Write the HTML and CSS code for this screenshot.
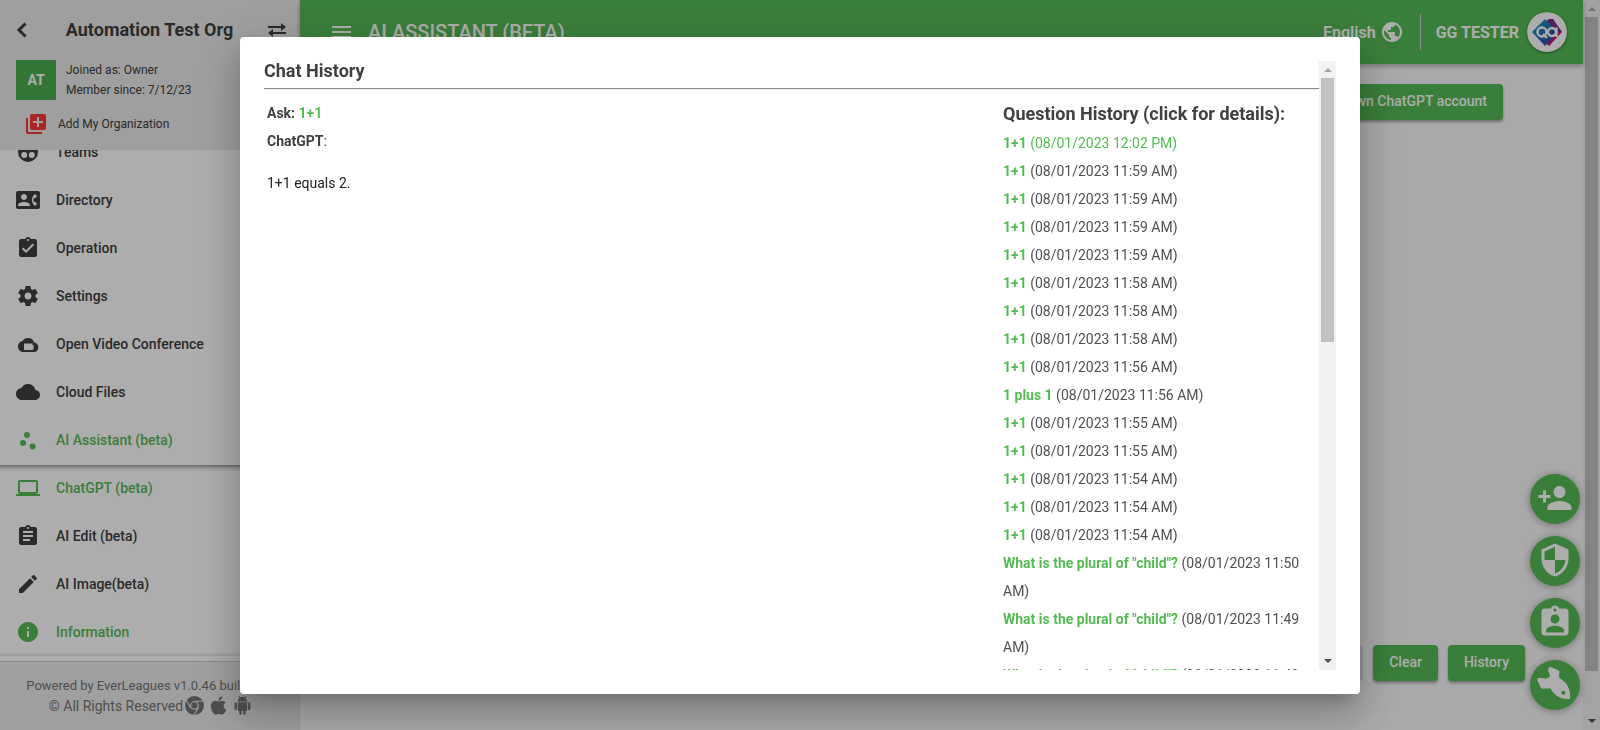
FILE: index.html
```html
<!DOCTYPE html>
<html lang="en">
<head>
<meta charset="utf-8">
<title>AI Assistant (beta)</title>
<link rel="stylesheet" href="styles.css">
</head>
<body>
<div class="page">
  <aside class="sidebar">
    <header class="org">
      <div class="org-top">
        <button class="icon-btn" aria-label="Back"><svg class="ic-back" viewBox="0 0 12 16"><path d="M9.500 1.500L3 8l6.500 6.500" fill="none" stroke="currentColor" stroke-width="3"/></svg></button>
        <h2 class="org-name">Automation Test Org</h2>
        <button class="icon-btn" aria-label="Switch organization"><svg class="ic-swap" viewBox="0 0 20 14"><path d="M1 3h13V0l5 4-5 4V5H1zM19 9v2H6v3l-5-4 5-4v3z"/></svg></button>
      </div>
      <div class="org-info">
        <div class="org-badge">AT</div>
        <div class="org-meta"><div>Joined as: Owner</div><div>Member since: 7/12/23</div></div>
      </div>
      <button class="add-org"><svg class="ic red" viewBox="0 0 24 24"><path d="M4 6H2v14c0 1.100.9 2 2 2h14v-2H4V6zm16-4H8c-1.100 0-2 .9-2 2v12c0 1.100.9 2 2 2h12c1.100 0 2-.9 2-2V4c0-1.100-.9-2-2-2zm-1 9h-4v4h-2v-4H9V9h4V5h2v4h4v2z"/></svg>Add My Organization</button>
    </header>
    <nav class="nav">
      <a class="item" href="#"><svg class="ic" viewBox="0 0 24 24"><path fill-rule="evenodd" d="M12 2a10 10 0 1 0 0 20 10 10 0 0 0 0-20zM8.200 12a3 3 0 1 1 0 6 3 3 0 0 1 0-6zm7.600 0a3 3 0 1 1 0 6 3 3 0 0 1 0-6z"/></svg>Teams</a>
      <a class="item" href="#"><svg class="ic" viewBox="0 0 24 24"><path d="M22 3H2C.9 3 0 3.900 0 5v14c0 1.100.9 2 2 2h20c1.100 0 1.990-.9 1.990-2L24 5c0-1.100-.9-2-2-2zM8 6c1.660 0 3 1.340 3 3s-1.340 3-3 3-3-1.340-3-3 1.340-3 3-3zm6 12H2v-1c0-2 4-3.100 6-3.100s6 1.100 6 3.100v1zm3.850-4h1.640L21 16l-1.990 1.990c-1.310-.98-2.280-2.380-2.730-3.990-.18-.64-.28-1.310-.28-2s.1-1.360.28-2c.45-1.620 1.420-3.010 2.730-3.990L21 8l-1.510 2h-1.640c-.22.63-.35 1.300-.35 2s.13 1.370.35 2z"/></svg>Directory</a>
      <a class="item" href="#"><svg class="ic" viewBox="0 0 24 24"><path d="M19 3h-4.180C14.400 1.840 13.300 1 12 1c-1.300 0-2.400.84-2.820 2H5c-1.100 0-2 .9-2 2v14c0 1.100.9 2 2 2h14c1.100 0 2-.9 2-2V5c0-1.100-.9-2-2-2zm-7 0c.55 0 1 .45 1 1s-.45 1-1 1-1-.45-1-1 .45-1 1-1zm-2 14l-4-4 1.410-1.410L10 14.170l6.590-6.590L18 9l-8 8z"/></svg>Operation</a>
      <a class="item" href="#"><svg class="ic" viewBox="0 0 24 24"><path d="M19.430 12.980c.04-.32.07-.64.07-.98s-.03-.66-.07-.98l2.110-1.650c.19-.15.24-.42.12-.64l-2-3.460c-.12-.22-.39-.3-.61-.22l-2.490 1c-.52-.4-1.080-.73-1.690-.98l-.38-2.650C14.460 2.180 14.250 2 14 2h-4c-.25 0-.46.18-.49.42l-.38 2.650c-.61.25-1.170.59-1.690.98l-2.490-1c-.23-.09-.49 0-.61.22l-2 3.460c-.13.22-.07.49.12.64l2.110 1.650c-.04.32-.07.65-.07.98s.03.66.07.98l-2.110 1.650c-.19.15-.24.42-.12.64l2 3.460c.12.22.39.3.61.22l2.490-1c.52.4 1.080.73 1.690.98l.38 2.650c.03.24.24.42.49.42h4c.25 0 .46-.18.49-.42l.38-2.650c.61-.25 1.170-.59 1.690-.98l2.490 1c.23.09.49 0 .61-.22l2-3.460c.12-.22.07-.49-.12-.64l-2.110-1.650zM12 15.500c-1.930 0-3.500-1.570-3.500-3.500s1.570-3.500 3.500-3.500 3.500 1.570 3.500 3.500-1.570 3.500-3.500 3.500z"/></svg>Settings</a>
      <a class="item" href="#"><svg class="ic" viewBox="0 0 24 24"><path fill-rule="evenodd" d="M18.200 10.600C17.600 7.800 15.100 6 12.200 6 9.700 6 7.600 7.200 6.600 9.100 4.100 9.500 2 11.700 2 14.500 2 17.500 4.300 20 7 20h11c2.400 0 4.400-2 4.400-4.600 0-2.500-1.900-4.600-4.200-4.800zM8 11.500h8.500v2l1-.6v5l-1-.6v.7H8z"/></svg>Open Video Conference</a>
      <a class="item" href="#"><svg class="ic" viewBox="0 0 24 24"><path d="M19.350 10.040C18.670 6.590 15.640 4 12 4 9.110 4 6.600 5.640 5.350 8.040 2.340 8.360 0 10.910 0 14c0 3.310 2.690 6 6 6h13c2.760 0 5-2.240 5-5 0-2.640-2.050-4.780-4.650-4.960z"/></svg>Cloud Files</a>
      <a class="item on" href="#"><svg class="ic" viewBox="0 0 24 24"><circle cx="11" cy="7" r="3"/><circle cx="7" cy="15" r="3"/><circle cx="16.600" cy="18.600" r="3"/></svg>AI Assistant (beta)</a>
      <div class="subnav">
        <a class="item on" href="#"><svg class="ic" viewBox="0 0 24 24"><path d="M20 18c1.100 0 1.990-.9 1.990-2L22 6c0-1.100-.9-2-2-2H4c-1.100 0-2 .9-2 2v10c0 1.100.9 2 2 2H0v2h24v-2h-4zM4 6h16v10H4V6z"/></svg>ChatGPT (beta)</a>
        <a class="item" href="#"><svg class="ic" viewBox="0 0 24 24"><path d="M19 3h-4.180C14.400 1.840 13.300 1 12 1c-1.300 0-2.400.84-2.820 2H5c-1.100 0-2 .9-2 2v14c0 1.100.9 2 2 2h14c1.100 0 2-.9 2-2V5c0-1.100-.9-2-2-2zm-7 0c.55 0 1 .45 1 1s-.45 1-1 1-1-.45-1-1 .45-1 1-1zm2 14H7v-2h7v2zm3-4H7v-2h10v2zm0-4H7V7h10v2z"/></svg>AI Edit (beta)</a>
        <a class="item" href="#"><svg class="ic" viewBox="0 0 24 24"><path d="M3 17.250V21h3.750L17.810 9.940l-3.750-3.750L3 17.250zM20.710 7.040c.39-.39.39-1.020 0-1.410l-2.340-2.340c-.39-.39-1.020-.39-1.410 0l-1.830 1.830 3.750 3.750 1.830-1.830z"/></svg>AI Image(beta)</a>
        <a class="item on" href="#"><svg class="ic" viewBox="0 0 24 24"><path d="M12 2C6.480 2 2 6.480 2 12s4.480 10 10 10 10-4.480 10-10S17.520 2 12 2zm1 15h-2v-6h2v6zm0-8h-2V7h2v2z"/></svg>Information</a>
      </div>
    </nav>
    <footer class="foot">
      <div>Powered by EverLeagues v1.0.46 build 123</div>
      <div class="foot-row">© All Rights Reserved
        <span class="foot-icons">
        <svg viewBox="0 0 24 24"><path fill-rule="evenodd" d="M12 0a12 12 0 1 0 0 24 12 12 0 0 0 0-24zm0 6.500a5.500 5.500 0 1 1 0 11 5.500 5.500 0 0 1 0-11z"/><circle cx="12" cy="12" r="4"/><path d="M12 6.500h11M7.200 14.700L1.700 5.300M16.800 14.700L11.300 24" fill="none" stroke="#ebebeb" stroke-width="1.300"/></svg>
        <svg viewBox="-40 32 464 448"><path d="M318.700 268.700c-.2-36.700 16.400-64.400 50-84.800-18.800-26.900-47.200-41.700-84.700-44.600-35.500-2.800-74.300 20.700-88.500 20.700-15 0-49.400-19.700-76.400-19.700C63.300 141.200 4 184.800 4 273.500q0 39.300 14.400 81.200c12.800 36.700 59 126.700 107.200 125.200 25.200-.6 43-17.900 75.800-17.900 31.800 0 48.300 17.900 76.400 17.900 48.600-.7 90.400-82.500 102.600-119.300-65.200-30.700-61.700-90-61.700-91.900zm-56.600-164.200c27.300-32.400 24.800-61.900 24-72.500-24.100 1.400-52 16.400-67.900 34.900-17.500 19.800-27.800 44.300-25.600 71.900 26.100 2 49.900-11.400 69.500-34.300z"/></svg>
        <svg viewBox="0 0 24 24"><path d="M6 18c0 .55.45 1 1 1h1v3.500c0 .83.67 1.500 1.500 1.500s1.500-.67 1.500-1.500V19h2v3.500c0 .83.67 1.500 1.500 1.500s1.500-.67 1.500-1.500V19h1c.55 0 1-.45 1-1V8H6v10zM3.500 8C2.670 8 2 8.670 2 9.500v7c0 .83.67 1.500 1.500 1.500S5 17.330 5 16.500v-7C5 8.670 4.330 8 3.500 8zm17 0c-.83 0-1.500.67-1.500 1.500v7c0 .83.67 1.500 1.500 1.500s1.500-.67 1.500-1.500v-7c0-.83-.67-1.500-1.500-1.500zm-4.970-5.840l1.300-1.300c.2-.2.2-.51 0-.71-.2-.2-.51-.2-.71 0l-1.480 1.480C13.850 1.230 12.950 1 12 1c-.96 0-1.860.23-2.660.63L7.850.15c-.2-.2-.51-.2-.71 0-.2.2-.2.51 0 .71l1.310 1.310C6.970 3.260 6 5.010 6 7h12c0-1.990-.97-3.750-2.470-4.840zM10 5H9V4h1v1zm5 0h-1V4h1v1z"/></svg>
        </span>
      </div>
    </footer>
  </aside>

  <main class="main">
    <header class="bar">
      <button class="icon-btn" aria-label="Menu"><svg class="ic" viewBox="0 0 24 24"><path d="M2 18h19v-2H2v2zm0-5h19v-2H2v2zm0-7v2h19V6H2z"/></svg></button>
      <h1 class="bar-title">AI ASSISTANT (BETA)</h1>
      <button class="lang">English<svg class="ic" viewBox="0 0 24 24"><path d="M12 2C6.480 2 2 6.480 2 12s4.480 10 10 10 10-4.480 10-10S17.520 2 12 2zm-1 17.930c-3.950-.49-7-3.850-7-7.930 0-.62.08-1.210.21-1.790L9 15v1c0 1.100.9 2 2 2v1.930zm6.900-2.540c-.26-.81-1-1.390-1.900-1.390h-1v-3c0-.55-.45-1-1-1H8v-2h2c.55 0 1-.45 1-1V7h2c1.100 0 2-.9 2-2v-.41c2.930 1.190 5 4.060 5 7.410 0 2.080-.8 3.970-2.100 5.390z"/></svg></button>
      <button class="user">GG TESTER
        <svg class="avatar" viewBox="0 0 40 40"><defs><linearGradient id="g" x1="0" y1="0" x2="1" y2="1"><stop offset="0" stop-color="#12b4c8"/><stop offset=".6" stop-color="#2a5cb0"/><stop offset="1" stop-color="#4a3a98"/></linearGradient></defs><circle cx="20" cy="20" r="20" fill="#fff"/><path d="M22 7l13 13-13 14-5-5 9-9-9-9z" fill="#c4127c"/><path d="M22 7l4 0 9 13h-6L18 11z" fill="#7a2a8c"/><path d="M18 7L5 20l13 14 13-14z" fill="url(#g)"/><g fill="none" stroke="#fff" stroke-width="2.400"><circle cx="15" cy="20" r="4.500"/><path d="M16 22l4 4"/><circle cx="25" cy="20" r="4"/><path d="M29.500 15.500V25"/></g></svg>
      </button>
    </header>
    <section class="body">
      <button class="btn">Use my own ChatGPT account</button>
      <div class="actions">
        <button class="btn" disabled>Send</button>
        <button class="btn">Clear</button>
        <button class="btn">History</button>
      </div>
    </section>
    <div class="fabs">
      <button class="fab" aria-label="Invite"><svg viewBox="0 0 24 24"><path d="M15 12c2.210 0 4-1.790 4-4s-1.790-4-4-4-4 1.790-4 4 1.790 4 4 4zm-9-2V7H4v3H1v2h3v3h2v-3h3v-2H6zm9 4c-2.670 0-8 1.340-8 4v2h16v-2c0-2.660-5.330-4-8-4z"/></svg></button>
      <button class="fab" aria-label="Security"><svg viewBox="0 0 24 24"><path d="M12 1L3 5v6c0 5.550 3.840 10.740 9 12 5.160-1.260 9-6.450 9-12V5l-9-4zm0 10.990h7c-.53 4.120-3.280 7.790-7 8.940V12H5V6.300l7-3.110v8.800z"/></svg></button>
      <button class="fab" aria-label="Profile"><svg viewBox="0 0 24 24"><path d="M19 3h-4.180C14.400 1.840 13.300 1 12 1c-1.300 0-2.400.84-2.820 2H5c-1.100 0-2 .9-2 2v14c0 1.100.9 2 2 2h14c1.100 0 2-.9 2-2V5c0-1.100-.9-2-2-2zm-7 0c.55 0 1 .45 1 1s-.45 1-1 1-1-.45-1-1 .45-1 1-1zm0 4c1.660 0 3 1.340 3 3s-1.340 3-3 3-3-1.340-3-3 1.340-3 3-3zm6 12H6v-1.400c0-2 4-3.100 6-3.100s6 1.100 6 3.100V19z"/></svg></button>
      <button class="fab" aria-label="Tools"><svg viewBox="81 227 108 108"><path fill-rule="evenodd" d="M81 268q2-7 9-6l16 3 12-4 2-5-6-17q0-8 8-9l23 10q4 2 3 7l-1 14 21 18q15 22 12 47-25 2-43-12-8-6-16-20l-24 1q-7-2-10-16zM160 301a6 6 0 1 0 0 12 6 6 0 0 0 0-12z"/></svg></button>
    </div>
  </main>
  <div class="scroll" aria-hidden="true"><i class="up"></i><i class="thumb page-thumb"></i><i class="down"></i></div>
</div>

<div class="scrim">
  <div class="dialog" role="dialog" aria-labelledby="dlg-title">
    <div class="dialog-scroll">
      <h2 class="heading" id="dlg-title">Chat History</h2>
      <hr class="rule">
      <div class="cols">
        <div class="answer">
          <p><b>Ask:</b> <b class="q">1+1</b></p>
          <p><b>ChatGPT</b>:</p>
          <p class="reply">1+1 equals 2.</p>
        </div>
        <div class="history">
          <h3 class="heading">Question History (click for details):</h3>
          <ul class="list">
            <li class="current"><b class="q">1+1</b> (08/01/2023 12:02 PM)</li>
            <li><b class="q">1+1</b> (08/01/2023 11:59 AM)</li>
            <li><b class="q">1+1</b> (08/01/2023 11:59 AM)</li>
            <li><b class="q">1+1</b> (08/01/2023 11:59 AM)</li>
            <li><b class="q">1+1</b> (08/01/2023 11:59 AM)</li>
            <li><b class="q">1+1</b> (08/01/2023 11:58 AM)</li>
            <li><b class="q">1+1</b> (08/01/2023 11:58 AM)</li>
            <li><b class="q">1+1</b> (08/01/2023 11:58 AM)</li>
            <li><b class="q">1+1</b> (08/01/2023 11:56 AM)</li>
            <li><b class="q">1 plus 1</b> (08/01/2023 11:56 AM)</li>
            <li><b class="q">1+1</b> (08/01/2023 11:55 AM)</li>
            <li><b class="q">1+1</b> (08/01/2023 11:55 AM)</li>
            <li><b class="q">1+1</b> (08/01/2023 11:54 AM)</li>
            <li><b class="q">1+1</b> (08/01/2023 11:54 AM)</li>
            <li><b class="q">1+1</b> (08/01/2023 11:54 AM)</li>
            <li><b class="q">What is the plural of "child"?</b> (08/01/2023 11:50 AM)</li>
            <li><b class="q">What is the plural of "child"?</b> (08/01/2023 11:49 AM)</li>
            <li><b class="q">What is the plural of "child"?</b> (08/01/2023 11:49 AM)</li>
          </ul>
        </div>
      </div>
    </div>
    <div class="scroll" aria-hidden="true"><i class="up"></i><i class="thumb dialog-thumb"></i><i class="down"></i></div>
  </div>
</div>
</body>
</html>
```

FILE: styles.css
```css
* { box-sizing: border-box; }
body {
  margin: 0;
  font-family: Roboto, "Liberation Sans", sans-serif;
  font-size: 14px;
  color: #404040;
  overflow: hidden;
}
h1, h2, h3, p, ul { margin: 0; padding: 0; }
button {
  border: 0;
  padding: 0;
  background: none;
  font: inherit;
  color: inherit;
}
svg { fill: currentColor; display: block; flex: none; }
.ic { width: 24px; height: 24px; }
.icon-btn { display: flex; }

.page { display: flex; height: 100vh; background: #fafafa; }

/* Sidebar */
.sidebar {
  width: 300px;
  flex: none;
  display: flex;
  flex-direction: column;
  background: #fff;
  border-right: 1px solid #e0e0e0;
}
.org {
  flex: none;
  height: 150px;
  padding: 16px 12px 0 16px;
  background: #ebebeb;
}
.org-top { display: flex; align-items: center; justify-content: space-between; height: 28px; }
.ic-back { width: 12px; height: 16px; }
.ic-swap { width: 20px; height: 14px; }
.org-name { padding: 0 0 2px 4px; font-size: 18px; font-weight: 700; }
.org-info { display: flex; gap: 10px; margin-top: 16px; }
.org-badge {
  width: 40px;
  height: 40px;
  line-height: 40px;
  text-align: center;
  background: #4caf50;
  color: #fff;
  font-weight: 700;
}
.org-meta { font-size: 12px; line-height: 20px; }
.add-org {
  display: flex;
  align-items: center;
  gap: 10px;
  margin: 12px 0 0 8px;
  font-size: 12px;
}
.red { color: #f83838; }

.nav {
  flex: 1;
  min-height: 0;
  overflow: hidden;
  display: flex;
  flex-direction: column;
  justify-content: flex-end;
  padding-bottom: 5px;
}
.item {
  display: flex;
  flex: none;
  align-items: center;
  gap: 16px;
  height: 48px;
  padding-left: 16px;
  color: #404040;
  font-weight: 500;
  text-decoration: none;
}
.item.on { color: #55bb54; }
.subnav {
  background:
    linear-gradient(#fff 1px, #999 1px, #ddd 4px, transparent 8px),
    linear-gradient(to top, #e0e0e0, transparent 4px);
}

.foot {
  flex: none;
  height: 69px;
  padding-top: 14px;
  border-top: 1px solid #ccc;
  background: #ebebeb;
  color: #757575;
  font-size: 13px;
  line-height: 20px;
  text-align: center;
  white-space: nowrap;
}
.foot-row { display: flex; justify-content: center; gap: 2px; padding-left: 2px; font-size: 14px; }
.foot-icons { display: flex; gap: 5px; }
.foot-icons svg { width: 19px; height: 19px; }

/* Main area */
.main { flex: 1; min-width: 0; display: flex; flex-direction: column; position: relative; }
.bar {
  display: flex;
  align-items: center;
  flex: none;
  height: 64px;
  padding: 0 16px 0 30px;
  background: #55bb54;
  color: #fff;
  box-shadow: 0 2px 5px rgba(0, 0, 0, .3);
}
.bar-title { flex: 1; margin-left: 14px; font-size: 20px; font-weight: 500; }
.lang, .user { display: flex; align-items: center; font-size: 16px; font-weight: 700; }
.lang { gap: 4px; height: 36px; padding-right: 16px; border-right: 1px solid #d0d0d0; }
.user { gap: 8px; padding-left: 15px; }
.avatar { width: 40px; height: 40px; border-radius: 50%; box-shadow: 0 1px 3px rgba(0, 0, 0, .4); }
.body {
  flex: 1;
  display: flex;
  flex-direction: column;
  justify-content: space-between;
  align-items: flex-end;
  padding: 20px 58px 49px 24px;
}
.body > .btn { margin-right: 22px; }
.actions { display: flex; gap: 10px; }
.btn {
  height: 36px;
  padding: 0 16px 2px;
  border-radius: 4px;
  background: #55bb54;
  color: #fff;
  font-weight: 500;
  box-shadow: 0 2px 3px rgba(0, 0, 0, .35);
}
.btn:disabled { background: #e0e0e0; color: #a6a6a6; box-shadow: none; }
.fabs {
  position: absolute;
  right: 3px;
  bottom: 20px;
  display: flex;
  flex-direction: column;
  gap: 12px;
}
.fab {
  display: flex;
  align-items: center;
  justify-content: center;
  width: 50px;
  height: 50px;
  padding-bottom: 3px;
  border-radius: 50%;
  background: #55bb54;
  color: #fff;
  box-shadow: 0 1px 8px rgba(0, 0, 0, .35);
}
.fab svg { width: 36px; height: 36px; }

/* Scrollbars */
.scroll {
  width: 17px;
  flex: none;
  display: flex;
  flex-direction: column;
  align-items: center;
  padding: 7px 0;
  background: #f1f1f1;
}
.up, .down { border: 4px solid transparent; flex: none; }
.up { border-top: 0; border-bottom-color: #a3a3a3; margin-bottom: 6px; }
.down { border-bottom: 0; border-top-color: #505050; margin-top: auto; }
.thumb { width: 13px; background: #c1c1c1; }
.page-thumb { height: 91.4%; }
.dialog-thumb { height: 44.4%; }

/* Dialog */
.scrim {
  position: fixed;
  inset: 0;
  display: flex;
  align-items: center;
  justify-content: center;
  background: rgba(0, 0, 0, .32);
}
.dialog {
  display: flex;
  width: 70vw;
  height: 90vh;
  padding: 24px;
  border-radius: 4px;
  background: #fff;
  box-shadow: 0 11px 15px -7px rgba(0, 0, 0, .2), 0 24px 38px 3px rgba(0, 0, 0, .14), 0 9px 46px 8px rgba(0, 0, 0, .12);
}
.dialog-scroll { flex: 1; overflow: hidden; }
.heading { font-size: 18px; font-weight: 700; line-height: 20px; }
.rule { margin: 7px 0 9px; border: 0; border-top: 1px solid #8c8c8c; border-bottom: 1px solid #eee; }
.cols { display: flex; padding: 0 3px; line-height: 28px; }
.answer { flex: 1; }
.answer p { min-height: 28px; }
.answer .reply { margin-top: 14px; color: #222; }
.history { width: 313px; }
.history .heading { line-height: 30px; }
.list { list-style: none; color: #505050; }
.q { color: #55bb54; }
.list .current { color: #55bb54; }
```
